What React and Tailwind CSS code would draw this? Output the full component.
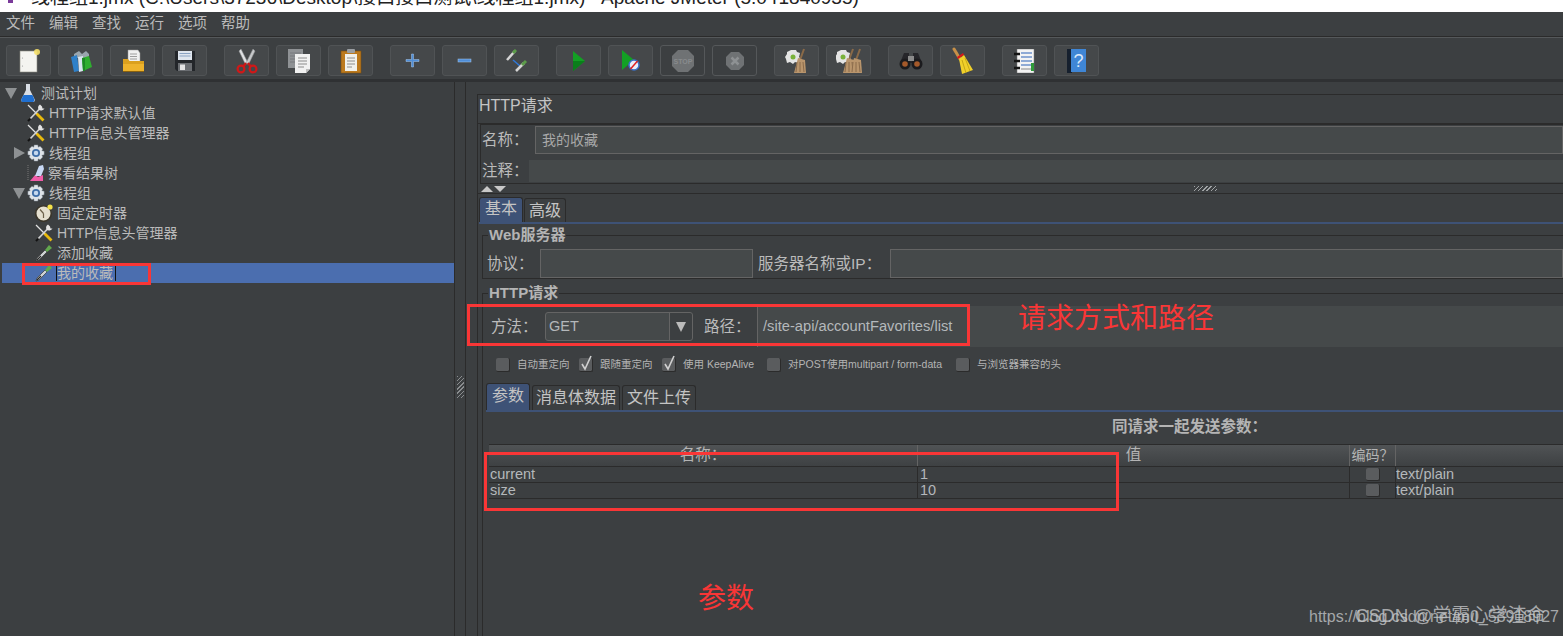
import React from "react";

const CJK = "font-['Liberation_Sans','Noto_Sans_CJK_SC',sans-serif]";

// toolbar icons
const IconNew = () => (
  <svg width="26" height="26" viewBox="0 0 26 26">
    <rect x="4" y="3" width="17" height="21" fill="#f4f4f0" stroke="#8a8a80" strokeWidth="0.6" />
    <circle cx="6.5" cy="10" r="0.6" fill="#999" />
    <circle cx="6.5" cy="18" r="0.6" fill="#999" />
    <circle cx="21" cy="4" r="3" fill="#f5e06a" opacity="0.9" />
  </svg>
);
const IconTemplates = () => (
  <svg width="26" height="26" viewBox="0 0 26 26">
    <path d="M6 6l5-3 3 3 4-3 3 3v4H6z" fill="#9aa6ae" />
    <path d="M3 9l6-2 2 16-5 1z" fill="#2f80c8" />
    <path d="M10 9l5-1v15l-4 1z" fill="#d9e4ee" />
    <path d="M14 10l7-2 3 11-9 4z" fill="#2fae2f" />
    <path d="M14 10l3 0v13l-2 0z" fill="#1c8a24" />
  </svg>
);
const IconOpen = () => (
  <svg width="26" height="26" viewBox="0 0 26 26">
    <path d="M8 2h10l2 3v10H8z" fill="#f0f0f0" stroke="#9a9a9a" strokeWidth="0.5" />
    <path d="M10 6h7M10 8.500h7M10 11h7" stroke="#888" strokeWidth="0.8" />
    <path d="M3 11h5l1.500 2H24v10a1 1 0 0 1-1 1H4a1 1 0 0 1-1-1z" fill="#dba01e" />
    <path d="M3 16h21v7a1 1 0 0 1-1 1H4a1 1 0 0 1-1-1z" fill="#eeb32c" />
    <path d="M3 23h21v1H3z" fill="#8a6210" />
  </svg>
);
const IconSave = () => (
  <svg width="24" height="24" viewBox="0 0 24 24">
    <path d="M2 2h20v20H4l-2-2z" fill="#23262a" />
    <rect x="5" y="2" width="14" height="9" fill="#dfe6ee" />
    <path d="M6.500 4.500h11M6.500 7h11" stroke="#8aa3c2" strokeWidth="1" />
    <rect x="5" y="14" width="14" height="8" fill="#6b6e72" />
    <rect x="7" y="15.500" width="5" height="5.500" fill="#e4e4e4" />
  </svg>
);
const IconCut = () => (
  <svg width="22" height="26" viewBox="0 0 22 26">
    <path d="M5 1l7 14-2.500 1.500L3 3z" fill="#dfe1e3" stroke="#8d8f91" strokeWidth="0.5" />
    <path d="M17 1l-7 14 2.500 1.500L19 3z" fill="#c6c8ca" stroke="#8d8f91" strokeWidth="0.5" />
    <path d="M10 15l-3 4M12 15l3 4" stroke="#c81818" strokeWidth="2.400" />
    <circle cx="5" cy="21" r="3.400" fill="none" stroke="#d01818" strokeWidth="2.200" />
    <circle cx="17" cy="21" r="3.400" fill="none" stroke="#d01818" strokeWidth="2.200" />
  </svg>
);
const IconCopy = () => (
  <svg width="24" height="26" viewBox="0 0 24 26">
    <rect x="1" y="1" width="15" height="19" fill="#8f9295" />
    <path d="M3 5h11M3 8h11M3 11h11M3 14h11" stroke="#77797c" />
    <path d="M8 6h15v15l-4 4H8z" fill="#f1f1f1" />
    <path d="M19 25v-4h4z" fill="#bdbdbd" />
    <path d="M11 10h9M11 13h9M11 16h9M11 19h6" stroke="#8b8b8b" />
  </svg>
);
const IconPaste = () => (
  <svg width="22" height="26" viewBox="0 0 22 26">
    <rect x="1" y="3" width="20" height="22" fill="#bc7a1e" stroke="#7a4e10" strokeWidth="0.6" />
    <path d="M5 6h12v17H5z" fill="#f1f1ec" />
    <path d="M7 10h8M7 13h8M7 16h8M7 19h5" stroke="#8e8e8e" />
    <rect x="7" y="1" width="8" height="4" rx="1" fill="#9a9ea2" />
  </svg>
);
const IconPlus = () => (
  <svg width="15" height="15" viewBox="0 0 15 15">
    <path d="M6.500 1h2v5.500H14v2H8.500V14h-2V8.500H1v-2h5.500z" fill="#4f8ed8" stroke="#a9c8ec" strokeWidth="0.5" />
  </svg>
);
const IconMinus = () => (
  <svg width="15" height="15" viewBox="0 0 15 15">
    <rect x="1" y="6" width="13" height="3" fill="#4f8ed8" stroke="#a9c8ec" strokeWidth="0.5" />
  </svg>
);
const IconToggle = () => (
  <svg width="24" height="24" viewBox="0 0 24 24">
    <path d="M2 11l8-9" stroke="#d5d5d5" strokeWidth="2.500" />
    <path d="M8 4l3-3" stroke="#5c9c4a" strokeWidth="3" />
    <path d="M8 11l7 6" stroke="#2f78d8" strokeWidth="1.500" />
    <path d="M11 22l8-8" stroke="#d5d5d5" strokeWidth="2.500" />
    <path d="M17 16l4-4" stroke="#5c9c4a" strokeWidth="3" />
  </svg>
);
const IconPlay = () => (
  <svg width="14" height="20" viewBox="0 0 14 20">
    <path d="M1 0l12 10L1 20z" fill="#13a024" />
    <path d="M1 10h12L1 20z" fill="#0a7e1b" />
  </svg>
);
const IconPlayNoTimer = () => (
  <svg width="20" height="22" viewBox="0 0 20 22">
    <path d="M1 0l12 10L1 20z" fill="#13a024" />
    <circle cx="13" cy="15" r="5" fill="#e8eef8" stroke="#3a70c8" strokeWidth="1.500" />
    <path d="M9.500 19l7-8" stroke="#e02020" strokeWidth="1.500" />
  </svg>
);
const IconStop = () => (
  <svg width="24" height="24" viewBox="0 0 24 24">
    <path d="M7 1h10l6 6v10l-6 6H7l-6-6V7z" fill="#6f7274" />
    <text x="12" y="15" textAnchor="middle" fontSize="7" fontWeight="700" fill="#888b8d" fontFamily="Liberation Sans">STOP</text>
  </svg>
);
const IconShutdown = () => (
  <svg width="20" height="20" viewBox="0 0 20 20">
    <path d="M6 1h8l5 5v8l-5 5H6l-5-5V6z" fill="#6f7274" />
    <path d="M6.500 6.500l7 7M13.500 6.500l-7 7" stroke="#8e9193" strokeWidth="2.500" />
  </svg>
);
const Gear = ({ size = 18 }) => (
  <svg width={size} height={size} viewBox="0 0 20 20">
    <path d="M8 1h4l.5 2.500 2-1 3 3-1 2L19 8v4l-2.500.5 1 2-3 3-2-1L12 19H8l-.5-2.500-2 1-3-3 1-2L1 12V8l2.500-.5-1-2 3-3 2 1z" fill="#dfe3e8" stroke="#7f8a95" strokeWidth="0.5" />
    <circle cx="10" cy="10" r="4.500" fill="#3f6ea8" />
    <circle cx="10" cy="10" r="2.500" fill="#c6d8ee" />
  </svg>
);
const Bristles = ({ x = 0 }) => (
  <g transform={`translate(${x} 0)`}>
    <path d="M19 1l-4 11" stroke="#8a6a48" strokeWidth="2" />
    <path d="M13 10l7 2 1 13-12 0z" fill="#b9956c" />
    <path d="M12 14l-1 10M15 14v10M18 14l1 10" stroke="#7e6042" strokeWidth="0.8" />
  </g>
);
const IconClear = () => (
  <svg width="24" height="26" viewBox="0 0 24 26">
    <path d="M6 2h5l1 2 3 1-1 4 2 2-3 4-3-1-2 2-3-2-3 1-1-4-1-2 2-3V4z" fill="#e4e4e4" />
    <circle cx="8" cy="9" r="2.500" fill="#79b23a" />
    <Bristles />
  </svg>
);
const IconClearAll = () => (
  <svg width="26" height="26" viewBox="0 0 26 26">
    <path d="M5 2h5l1 2 3 1-1 4 2 2-3 4-3-1-2 2-3-2-3 1-1-4-1-2 2-3V4z" fill="#e4e4e4" />
    <circle cx="7" cy="9" r="2.500" fill="#79b23a" />
    <Bristles x={-2} />
    <Bristles x={5} />
  </svg>
);
const IconSearch = () => (
  <svg width="24" height="18" viewBox="0 0 24 18">
    <path d="M5 1h5v5h4V1h5l4 10H1z" fill="#26262a" />
    <circle cx="6" cy="12" r="5.500" fill="#1b1b1e" />
    <circle cx="18" cy="12" r="5.500" fill="#1b1b1e" />
    <circle cx="6" cy="12" r="2.800" fill="#a4592a" />
    <circle cx="18" cy="12" r="2.800" fill="#a4592a" />
    <path d="M9 4h6v5H9z" fill="#8b8b8b" />
  </svg>
);
const IconBroom = () => (
  <svg width="24" height="28" viewBox="0 0 24 28">
    <path d="M3 2l6 10" stroke="#c79048" strokeWidth="3" strokeLinecap="round" />
    <path d="M6 10l6-4 1 2-6 4z" fill="#d81818" />
    <path d="M8 12l5-4 9 15-11 4z" fill="#f0d02a" />
    <path d="M11 13l4 13M14 11l5 13" stroke="#b99a12" strokeWidth="0.8" />
  </svg>
);
const IconLog = () => (
  <svg width="22" height="24" viewBox="0 0 22 24">
    <rect x="3" y="0" width="17" height="24" fill="#f3f3f3" stroke="#777" strokeWidth="0.5" />
    <path d="M7 4h11M7 8h11M7 12h11M7 16h11" stroke="#2c62b8" strokeWidth="1.200" />
    <path d="M7 20h11" stroke="#888" />
    <rect x="17" y="14" width="3" height="8" fill="#2f9a3a" />
    <path d="M0 5h6M0 12h6M0 19h6" stroke="#141414" strokeWidth="2.500" />
  </svg>
);
const IconHelp = () => (
  <svg width="20" height="24" viewBox="0 0 20 24">
    <rect x="0" y="0" width="5" height="24" fill="#16202e" />
    <rect x="4" y="0" width="15" height="23" fill="#3f86d6" />
    <text x="11.500" y="18" textAnchor="middle" fontSize="18" fill="#dbe9fa" fontFamily="Liberation Sans">?</text>
  </svg>
);

// tree icons
const Flask = () => (
  <svg width="14" height="18" viewBox="0 0 14 18">
    <path d="M5 0h4v6l5 10-1 2H1l-1-2 5-10z" fill="#d8dde4" />
    <path d="M2.500 11h9l2 5-1 2H1l-1-2z" fill="#1f6fd0" />
  </svg>
);
const Tools = () => (
  <svg width="18" height="18" viewBox="0 0 18 18">
    <path d="M1 1l9 9" stroke="#e2e2e2" strokeWidth="1.300" />
    <path d="M9.500 9.500l7 7" stroke="#e8b90c" strokeWidth="2.800" />
    <path d="M2 16L12.500 5" stroke="#d0d0d0" strokeWidth="1.800" />
    <path d="M13 0.500a4 4 0 0 0-1.500 5 4 4 0 0 0 6-1L15.500 4.500 15 2.500z" fill="#e4e4e4" />
    <path d="M1 17l2.500-2.500" stroke="#111" strokeWidth="2.200" />
  </svg>
);
const ResultTree = () => (
  <svg width="18" height="18" viewBox="0 0 18 18">
    <path d="M1 1v16" stroke="#777" strokeDasharray="1 1" />
    <path d="M3 17l5-6 3 2 5-2v6z" fill="#ef5ba8" />
    <path d="M8 12l4-10 4-1 1 4-3 7z" fill="#c8d8f4" />
  </svg>
);
const Timer = () => (
  <svg width="18" height="18" viewBox="0 0 18 18">
    <circle cx="8.500" cy="9.500" r="7.800" fill="#e4dfcf" stroke="#3a352a" strokeWidth="1.600" />
    <path d="M8.500 9.500L5 5.500M8.500 9.500V14" stroke="#6b604a" strokeWidth="1.200" />
    <circle cx="15" cy="3" r="2.600" fill="#f5e24a" />
  </svg>
);
const Dropper = () => (
  <svg width="18" height="18" viewBox="0 0 18 18">
    <path d="M1 17l1-3 8-8 2 2-8 8z" fill="#cfd2d4" stroke="#26282a" strokeWidth="0.6" />
    <path d="M2 16l4-4" stroke="#2a2a2a" strokeWidth="1.200" />
    <path d="M10 6l4-5 3 3-5 4z" fill="#62a84e" />
  </svg>
);

const ArrowDown = () => <span className="w-0 h-0 border-l-[6px] border-r-[6px] border-t-[11px] border-l-transparent border-r-transparent border-t-[#8e9193]" />;
const ArrowRight = () => <span className="w-0 h-0 border-t-[6px] border-b-[6px] border-l-[11px] border-t-transparent border-b-transparent border-l-[#8e9193]" />;

const toolbarGroups = [
  [[IconNew], [IconTemplates], [IconOpen], [IconSave]],
  [[IconCut], [IconCopy], [IconPaste]],
  [[IconPlus], [IconMinus], [IconToggle]],
  [[IconPlay], [IconPlayNoTimer], [IconStop, true], [IconShutdown, true]],
  [[IconClear], [IconClearAll]],
  [[IconSearch], [IconBroom]],
  [[IconLog], [IconHelp]],
];

const ToolButton = ({ icon: Icon, off }) => (
  <button className={`w-[45px] h-[31px] rounded-[3px] border flex items-center justify-center ${off ? "bg-[#3c3f41] border-[#55585a]" : "bg-[#45484a] border-[#505355]"}`}>
    <Icon />
  </button>
);

const Tab = ({ label, active, className }) => (
  <div className={`flex items-center justify-center rounded-t-[3px] border border-b-0 border-[#2b2b2b] ${active ? "bg-[#3e5276] text-[#c4c4c4]" : "bg-[#3c3f41] text-[#c4c4c4]"} ${className}`}>
    {label}
  </div>
);

const TreeRow = ({ pl, arrow, icon, textPl = "ml-[4px]", selected, children }) => (
  <div className={`h-5 flex items-center ${pl} ${selected ? "bg-[#4b6eaf]" : ""}`}>
    {arrow}
    {icon}
    <span className={`${textPl} whitespace-nowrap`}>{children}</span>
  </div>
);

const Check = ({ on, label, className }) => (
  <div className={`flex items-center ${className}`}>
    <span className="relative w-[14px] h-[14px] rounded-[2px] bg-[#5a5c5e] border-b border-r border-[#2b2b2b] shrink-0">
      {on && (
        <svg className="absolute -top-[3px] left-0" width="15" height="17" viewBox="0 0 15 17">
          <path d="M3 9l3 5 6-13" fill="none" stroke="#d0d0d0" strokeWidth="1.600" />
        </svg>
      )}
    </span>
    <span className="ml-[7px] text-[10.500px] text-[#b4b4b4] whitespace-nowrap">{label}</span>
  </div>
);

const Row = ({ name, value }) => (
  <div className="grid grid-cols-[429px_432px_46px_1fr] h-4 border-b border-[#2b2b2b] text-[14.500px] leading-[15px] text-[#b4b8bb]">
    <div className="pl-px border-r border-[#2b2b2b]">{name}</div>
    <div className="pl-[2px] border-r border-[#2b2b2b]">{value}</div>
    <div className="border-r border-[#2b2b2b] flex justify-center items-center">
      <span className="w-[14px] h-[13px] rounded-[2px] bg-[#5a5c5e] border-b border-r border-[#2b2b2b]" />
    </div>
    <div>text/plain</div>
  </div>
);

export default function App() {
  return (
    <div className={`relative w-[1563px] h-[636px] overflow-hidden bg-[#3c3f41] flex flex-col ${CJK}`}>
      {/* title bar, cut off by the crop */}
      <div className="h-3 bg-white overflow-hidden shrink-0 pl-[31px] relative">
        <span className="absolute left-2 top-0 w-[5px] h-[3px] bg-[#7a3a9a]" />
        <div className="-mt-[12px] text-[19px] leading-[20px] text-[#222] whitespace-nowrap">
          线程组1.jmx (C:\Users\37236\Desktop\接口接口测试\线程组1.jmx) - Apache JMeter (5.0 r1840935)
        </div>
      </div>

      {/* menu */}
      <div className="h-[25px] shrink-0 flex items-center gap-[14px] pl-[6px] text-[14.500px] text-[#bbbbbb] border-b border-[#2b2b2b]">
        {["文件", "编辑", "查找", "运行", "选项", "帮助"].map((m) => (
          <span key={m}>{m}</span>
        ))}
      </div>

      {/* toolbar */}
      <div className="h-[45px] shrink-0 flex items-start pt-[7px] pl-[6px] gap-[17px] border-t border-[#55585a] border-b-[3px] border-b-[#2f3133]">
        {toolbarGroups.map((group, i) => (
          <div key={i} className="flex gap-[7px]">
            {group.map(([Icon, off], j) => (
              <ToolButton key={j} icon={Icon} off={off} />
            ))}
          </div>
        ))}
      </div>

      <div className="flex-1 flex min-h-0">
        {/* tree */}
        <div className="w-[455px] shrink-0 border-r border-[#2b2b2b] pl-[2px] pt-px text-[14px] text-[#bbbbbb]">
          <TreeRow pl="pl-[3px]" arrow={<ArrowDown />} icon={<span className="ml-1 flex"><Flask /></span>} textPl="ml-[6px]">测试计划</TreeRow>
          <TreeRow pl="pl-[25px]" icon={<Tools />}>HTTP请求默认值</TreeRow>
          <TreeRow pl="pl-[25px]" icon={<Tools />}>HTTP信息头管理器</TreeRow>
          <TreeRow pl="pl-[12px]" arrow={<ArrowRight />} icon={<span className="ml-[2px] flex"><Gear /></span>}>线程组</TreeRow>
          <TreeRow pl="pl-[25px]" icon={<ResultTree />} textPl="ml-[3px]">察看结果树</TreeRow>
          <TreeRow pl="pl-[11px]" arrow={<ArrowDown />} icon={<span className="ml-[2px] flex"><Gear /></span>}>线程组</TreeRow>
          <TreeRow pl="pl-[33px]" icon={<Timer />}>固定定时器</TreeRow>
          <TreeRow pl="pl-[33px]" icon={<Tools />}>HTTP信息头管理器</TreeRow>
          <TreeRow pl="pl-[33px]" icon={<Dropper />}>添加收藏</TreeRow>
          <TreeRow pl="pl-[33px]" icon={<Dropper />} selected>
            <span className="inline-block w-[60px] -ml-px border-l border-r border-[#111] leading-[16px]">我的收藏</span>
          </TreeRow>
        </div>

        {/* splitter */}
        <div className="w-[11px] shrink-0 border-r border-[#2b2b2b] flex items-center justify-center pt-[55px]">
          <span className="w-[7px] h-[22px] bg-[repeating-linear-gradient(135deg,#8a8d8f_0px,#8a8d8f_1px,#3c3f41_1px,#3c3f41_3px)]" />
        </div>

        {/* right side */}
        <div className="flex-1 min-w-0 pl-[11px] pt-3 text-[#bbbbbb]">
          <div className="h-full border-l border-t border-[#2b2b2b] flex flex-col">
            <div className="h-[29px] shrink-0 border-b border-[#2b2b2b] flex items-center text-[16px] pl-px pb-[6px] text-[#c4c4c4]">HTTP请求</div>

            <div className="ml-[2px] h-[60px] shrink-0 border-l border-t border-b border-[#2b2b2b] flex flex-col text-[15.500px]">
              <div className="flex items-center mt-px h-7">
                <span className="w-[54px] pl-px whitespace-nowrap">名称：</span>
                <div className="flex-1 h-7 bg-[#45494a] border border-[#646464] pl-[6px] flex items-center text-[14px] text-[#a8a8a8]">我的收藏</div>
              </div>
              <div className="flex items-center mt-[6px] h-[22px]">
                <span className="w-[48px] shrink-0 pl-px whitespace-nowrap">注释：</span>
                <div className="flex-1 h-[22px] bg-[#45494a]" />
              </div>
            </div>

            {/* collapse arrows + grip */}
            <div className="h-[9px] shrink-0 relative flex items-center pl-[3px] gap-px">
              <span className="w-0 h-0 border-l-[6px] border-r-[6px] border-b-[6px] border-l-transparent border-r-transparent border-b-[#c8c8c8]" />
              <span className="w-0 h-0 border-l-[6px] border-r-[6px] border-t-[6px] border-l-transparent border-r-transparent border-t-[#c8c8c8]" />
              <span className="ml-[687px] w-[23px] h-[5px] bg-[repeating-linear-gradient(135deg,#a0a3a5_0px,#a0a3a5_1px,#3c3f41_1px,#3c3f41_3px)]" />
            </div>

            {/* main tabs */}
            <div className="flex-1 min-h-0 border-t border-[#2b2b2b] pl-[1px] pt-[3px] flex flex-col">
              <div className="flex gap-px text-[16px] h-[25px] shrink-0 items-end">
                <Tab label="基本" active className="w-[44px] h-[25px] pb-[3px]" />
                <Tab label="高级" className="w-[42px] h-[24px]" />
              </div>
              <div className="h-[2px] bg-[#3e5276] shrink-0" />

              <fieldset className="ml-[3px] mt-[4px] h-[51px] shrink-0 border border-r-0 border-[#2b2b2b] pl-[4px]">
                <legend className="ml-px px-px text-[15px] font-bold leading-[14px] text-[#b4b4b4]">Web服务器</legend>
                <div className="flex items-center text-[15.500px] mt-[7px]">
                  <span className="w-[53px] shrink-0 whitespace-nowrap">协议：</span>
                  <div className="w-[213px] h-[29px] shrink-0 bg-[#45494a] border border-[#646464]" />
                  <span className="ml-[5px] w-[132px] shrink-0 whitespace-nowrap">服务器名称或IP：</span>
                  <div className="flex-1 h-[29px] bg-[#45494a] border border-[#646464]" />
                </div>
              </fieldset>

              <fieldset className="ml-[3px] mt-[7px] flex-1 min-h-0 border border-r-0 border-b-0 border-[#2b2b2b] pl-[3px]">
                <legend className="ml-[2px] px-px text-[15px] font-bold leading-[14px] text-[#b4b4b4]">HTTP请求</legend>
                <div className="flex items-center h-[41px] mt-[6px]">
                  <div className="flex items-center w-[271px] shrink-0 text-[15.500px]">
                    <span className="w-[59px] pl-[5px] shrink-0 whitespace-nowrap">方法：</span>
                    <div className="w-[148px] h-[29px] shrink-0 bg-[#45494a] border border-[#646464] rounded-[3px] flex items-center">
                      <span className="flex-1 pl-[3px] text-[14.500px] text-[#b4b8bb]">GET</span>
                      <span className="w-[23px] h-full border-l border-[#646464] bg-[#3c3f41] rounded-r-[3px] flex items-center justify-center">
                        <span className="w-0 h-0 border-l-[5px] border-r-[5px] border-t-[10px] border-l-transparent border-r-transparent border-t-[#bbbbbb]" />
                      </span>
                    </div>
                    <span className="ml-[11px] whitespace-nowrap">路径：</span>
                  </div>
                  <div className="flex-1 h-[41px] bg-[#45494a] border-l border-[#646464] pl-[5px] flex items-center text-[14.700px] text-[#b4b8bb]">
                    /site-api/accountFavorites/list
                  </div>
                </div>

                <div className="flex items-center mt-[10px] h-[16px]">
                  <Check label="自动重定向" className="ml-[10px] w-[83px] shrink-0" />
                  <Check on label="跟随重定向" className="w-[83px] shrink-0" />
                  <Check on label="使用 KeepAlive" className="w-[105px] shrink-0" />
                  <Check label="对POST使用multipart / form-data" className="w-[189px] shrink-0" />
                  <Check label="与浏览器兼容的头" />
                </div>

                <div className="flex gap-[2px] mt-[11px] h-[26px] items-end text-[16px]">
                  <Tab label="参数" active className="w-[44px] h-[27px] pb-[3px]" />
                  <Tab label="消息体数据" className="w-[88px] h-[25px]" />
                  <Tab label="文件上传" className="w-[74px] h-[25px]" />
                </div>
                <div className="h-[2px] bg-[#3e5276]" />

                <div className="h-[32px] flex items-center pb-[2px] pl-[626px] text-[15.500px] font-bold text-[#b4b4b4] whitespace-nowrap">同请求一起发送参数：</div>

                <div className="ml-[3px]">
                  <div className="grid grid-cols-[429px_432px_46px_1fr] h-[23px] border-t border-b border-[#2b2b2b] bg-gradient-to-b from-[#505355] to-[#3e4143] text-[15.500px] text-[#b4b4b4]">
                    <div className="text-center border-r border-[#646464] leading-[20px]">名称：</div>
                    <div className="text-center border-r border-[#646464] leading-[20px]">值</div>
                    <div className="text-center border-r border-[#646464] text-[14px] leading-[20px] whitespace-nowrap">编码？</div>
                    <div />
                  </div>
                  <Row name="current" value="1" />
                  <Row name="size" value="10" />
                </div>
              </fieldset>
            </div>
          </div>
        </div>
      </div>

      {/* red annotations drawn over the screenshot */}
      <div className="absolute left-[22px] top-[263px] w-[129px] h-[22px] border-[3px] border-[#f93636]" />
      <div className="absolute left-[467px] top-[304px] w-[503px] h-[42px] border-[3px] border-[#f93636]" />
      <div className="absolute left-[484px] top-[452px] w-[635px] h-[59px] border-[3px] border-[#f93636]" />
      <div className="absolute left-[1018px] top-[301px] text-[28px] leading-[36px] text-[#f93636]">请求方式和路径</div>
      <div className="absolute left-[698px] top-[581px] text-[28px] leading-[36px] text-[#f93636]">参数</div>

      {/* watermarks */}
      <div className="absolute left-[1309px] top-[608px] text-[16px] leading-[18px] text-[#a5a8aa] whitespace-nowrap">https://blog.csdn.net/m0_53918927</div>
      <div className="absolute left-[1355px] top-[606px] text-[18.800px] leading-[20px] text-[#c4c6c8]/80 whitespace-nowrap">CSDN @学霸心学渣命</div>
    </div>
  );
}
